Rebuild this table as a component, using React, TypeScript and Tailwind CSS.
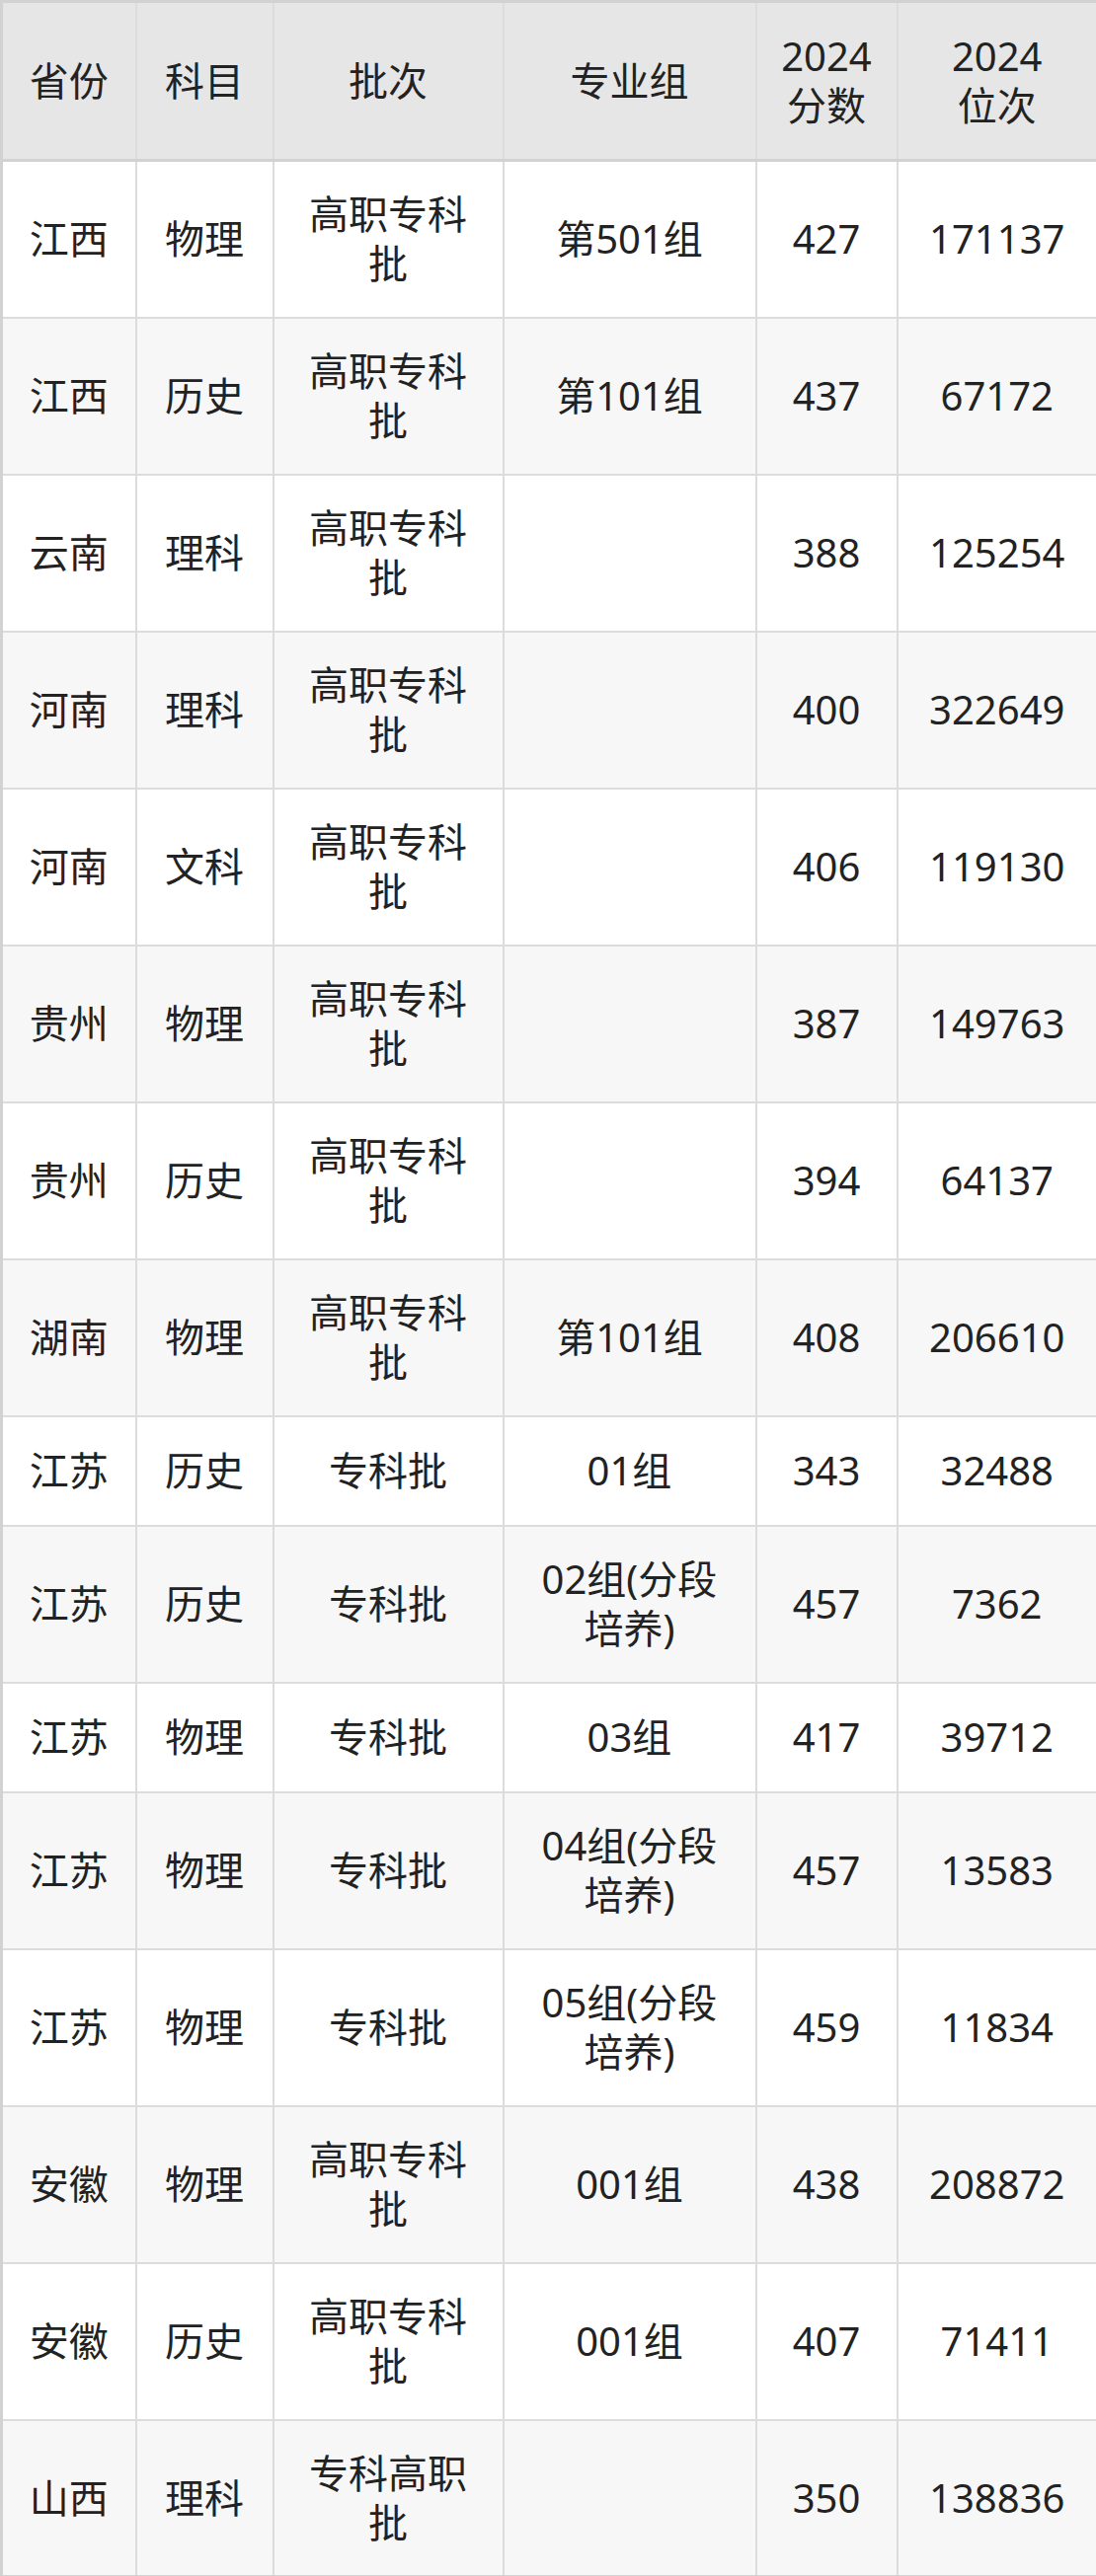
type Row = [string, string, string, string, string, string];

const rows: Row[] = [
  ["江西", "物理", "高职专科批", "第501组", "427", "171137"],
  ["江西", "历史", "高职专科批", "第101组", "437", "67172"],
  ["云南", "理科", "高职专科批", "", "388", "125254"],
  ["河南", "理科", "高职专科批", "", "400", "322649"],
  ["河南", "文科", "高职专科批", "", "406", "119130"],
  ["贵州", "物理", "高职专科批", "", "387", "149763"],
  ["贵州", "历史", "高职专科批", "", "394", "64137"],
  ["湖南", "物理", "高职专科批", "第101组", "408", "206610"],
  ["江苏", "历史", "专科批", "01组", "343", "32488"],
  ["江苏", "历史", "专科批", "02组(分段培养)", "457", "7362"],
  ["江苏", "物理", "专科批", "03组", "417", "39712"],
  ["江苏", "物理", "专科批", "04组(分段培养)", "457", "13583"],
  ["江苏", "物理", "专科批", "05组(分段培养)", "459", "11834"],
  ["安徽", "物理", "高职专科批", "001组", "438", "208872"],
  ["安徽", "历史", "高职专科批", "001组", "407", "71411"],
  ["山西", "理科", "专科高职批", "", "350", "138836"],
];

const cell =
  "border-2 border-[#dcdcdc] px-6 py-0 text-center align-middle leading-[50px]";

export default function App() {
  return (
    <div
      className="w-[1110px] bg-white text-[40px] text-[#222222]"
      style={{ fontFamily: '"Noto Sans", "Noto Sans CJK SC", sans-serif' }}
    >
      <table className="w-[1110px] table-fixed border-collapse border-[3px] border-[#d2d2d2]">
        <colgroup>
          <col className="w-[136px]" />
          <col className="w-[139px]" />
          <col className="w-[233px]" />
          <col className="w-[256px]" />
          <col className="w-[143px]" />
          <col className="w-[203px]" />
        </colgroup>
        <thead>
          <tr className="h-[161px] bg-[#e6e6e6]">
            <th className={`${cell} font-normal border-b-[3px] border-b-[#d2d2d2]`}>省份</th>
            <th className={`${cell} font-normal border-b-[3px] border-b-[#d2d2d2]`}>科目</th>
            <th className={`${cell} font-normal border-b-[3px] border-b-[#d2d2d2]`}>批次</th>
            <th className={`${cell} font-normal border-b-[3px] border-b-[#d2d2d2]`}>专业组</th>
            <th className={`${cell} font-normal leading-[48px] border-b-[3px] border-b-[#d2d2d2]`}>
              2024
              <br />
              分数
            </th>
            <th className={`${cell} font-normal leading-[48px] border-b-[3px] border-b-[#d2d2d2]`}>
              2024
              <br />
              位次
            </th>
          </tr>
        </thead>
        <tbody>
          {rows.map((r, i) => {
            const tall = r[2].length > 3 || r[3].length > 5;
            return (
              <tr
                key={i}
                className={`${tall ? "h-[159px]" : "h-[111px]"} ${
                  i % 2 === 0 ? "bg-white" : "bg-[#f7f7f7]"
                }`}
              >
                {r.map((v, j) => (
                  <td key={j} className={cell}>
                    {v}
                  </td>
                ))}
              </tr>
            );
          })}
        </tbody>
      </table>
    </div>
  );
}
